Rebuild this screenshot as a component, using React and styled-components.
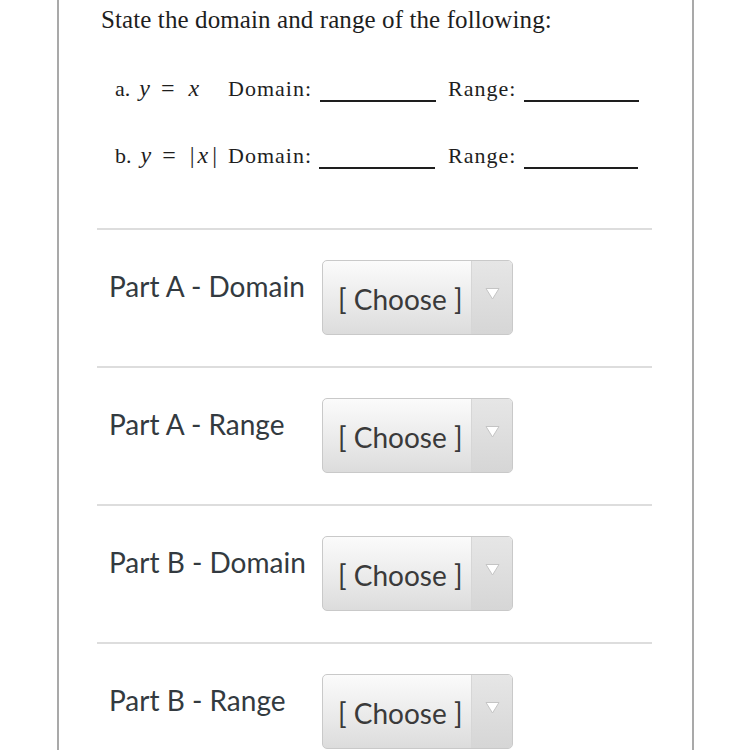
import React from 'react';
import styled, { createGlobalStyle } from 'styled-components';

const GlobalStyle = createGlobalStyle`
  html, body {
    margin: 0;
    padding: 0;
    background: #ffffff;
    overflow: hidden;
  }
`;

const parts = ['Part A - Domain', 'Part A - Range', 'Part B - Domain', 'Part B - Range'];

const App = () => {
  return (
    <React.Fragment>
      <GlobalStyle />
      <Frame>
        <Question>
          <Title>State the domain and range of the following:</Title>

          <EqLine>
            <Prefix>
              a.<Var gap={9}>y</Var><Eq>=</Eq><Var gap={0}>x</Var>
            </Prefix>
            <Word>Domain:</Word>
            <Blank gap={8} width={116}>{'\u00a0'}</Blank>
            <Word gap={12}>Range:</Word>
            <Blank gap={8} width={115}>{'\u00a0'}</Blank>
          </EqLine>

          <EqLine second>
            <Prefix>
              b.<Var gap={9}>y</Var><Eq>=</Eq><Abs>|<Var gap={3}>x</Var><Bar>|</Bar></Abs>
            </Prefix>
            <Word>Domain:</Word>
            <Blank gap={7} width={116}>{'\u00a0'}</Blank>
            <Word gap={13}>Range:</Word>
            <Blank gap={8} width={114}>{'\u00a0'}</Blank>
          </EqLine>
        </Question>

        {parts.map((p) => (
          <Row key={p}>
            <Label>{p}</Label>
            <Select>
              <Value>[ Choose ]</Value>
              <ArrowBox>
                <svg width="15" height="13" viewBox="0 0 15 13">
                  <path d="M1 1.5 L14 1.5 L7.5 12 Z" fill="#ffffff" stroke="#c4c4c4" strokeWidth="1" strokeLinejoin="round" />
                </svg>
              </ArrowBox>
            </Select>
          </Row>
        ))}
      </Frame>
    </React.Fragment>
  );
};

const Frame = styled.div`
  box-sizing: border-box;
  margin-left: 57px;
  width: 637px;
  min-height: 750px;
  border-left: 2px solid #a9a9a9;
  border-right: 2px solid #a9a9a9;
  padding: 0 40px 0 38px;
`;

const Question = styled.div`
  padding: 5px 0 58px 4px;
  font-family: "Liberation Serif", "Times New Roman", serif;
  color: #1e1e1e;
`;

const Title = styled.div`
  font-size: 25px;
  line-height: 30px;
  height: 30px;
  letter-spacing: 0.1px;
  white-space: nowrap;
`;

const EqLine = styled.div`
  display: flex;
  align-items: baseline;
  margin-top: ${(props) => (props.second ? '37px' : '38px')};
  padding-left: 14px;
  font-size: 22px;
  line-height: 30px;
  height: 30px;
  white-space: nowrap;
`;

const Prefix = styled.span`
  display: inline-flex;
  align-items: baseline;
  width: 113px;
`;

const Var = styled.span`
  font-family: "Liberation Serif", "Times New Roman", serif;
  font-style: italic;
  font-size: 24px;
  margin-left: ${(props) => props.gap}px;
`;

const Eq = styled.span`
  font-size: 24px;
  margin: 0 14px 0 11px;
`;

const Abs = styled.span`
  display: inline-flex;
  align-items: baseline;
  font-size: 24px;
`;

const Bar = styled.span`
  margin-left: 4px;
`;

const Word = styled.span`
  letter-spacing: 1px;
  margin-left: ${(props) => props.gap || 0}px;
`;

const Blank = styled.span`
  display: inline-block;
  width: ${(props) => props.width}px;
  margin-left: ${(props) => props.gap}px;
  line-height: 1;
  border-bottom: 2px solid #1e1e1e;
`;

const Row = styled.div`
  display: flex;
  align-items: flex-start;
  border-top: 2px solid #dddddd;
  padding: 30px 0 31px 12px;
`;

const Label = styled.div`
  width: 213px;
  margin-top: 9px;
  font-family: Lato, "Liberation Sans", sans-serif;
  font-size: 28px;
  line-height: 34px;
  color: #333a40;
  white-space: nowrap;
`;

const Select = styled.div`
  box-sizing: border-box;
  display: flex;
  width: 191px;
  height: 75px;
  border: 1px solid #c9c9c9;
  border-radius: 5px;
  overflow: hidden;
  background: linear-gradient(#fbfbfb, #e9e9e9 60%, #dcdcdc);
`;

const Value = styled.div`
  flex: 1;
  display: flex;
  align-items: center;
  padding: 3px 0 0 15px;
  font-family: Lato, "Liberation Sans", sans-serif;
  font-size: 28px;
  color: #3a3a3a;
  white-space: nowrap;
`;

const ArrowBox = styled.div`
  width: 40px;
  display: flex;
  justify-content: center;
  align-items: center;
  padding-bottom: 8px;
  border-left: 1px solid #d6d6d6;
  background: linear-gradient(#e6e6e6, #d6d6d6);
`;

export default App;
